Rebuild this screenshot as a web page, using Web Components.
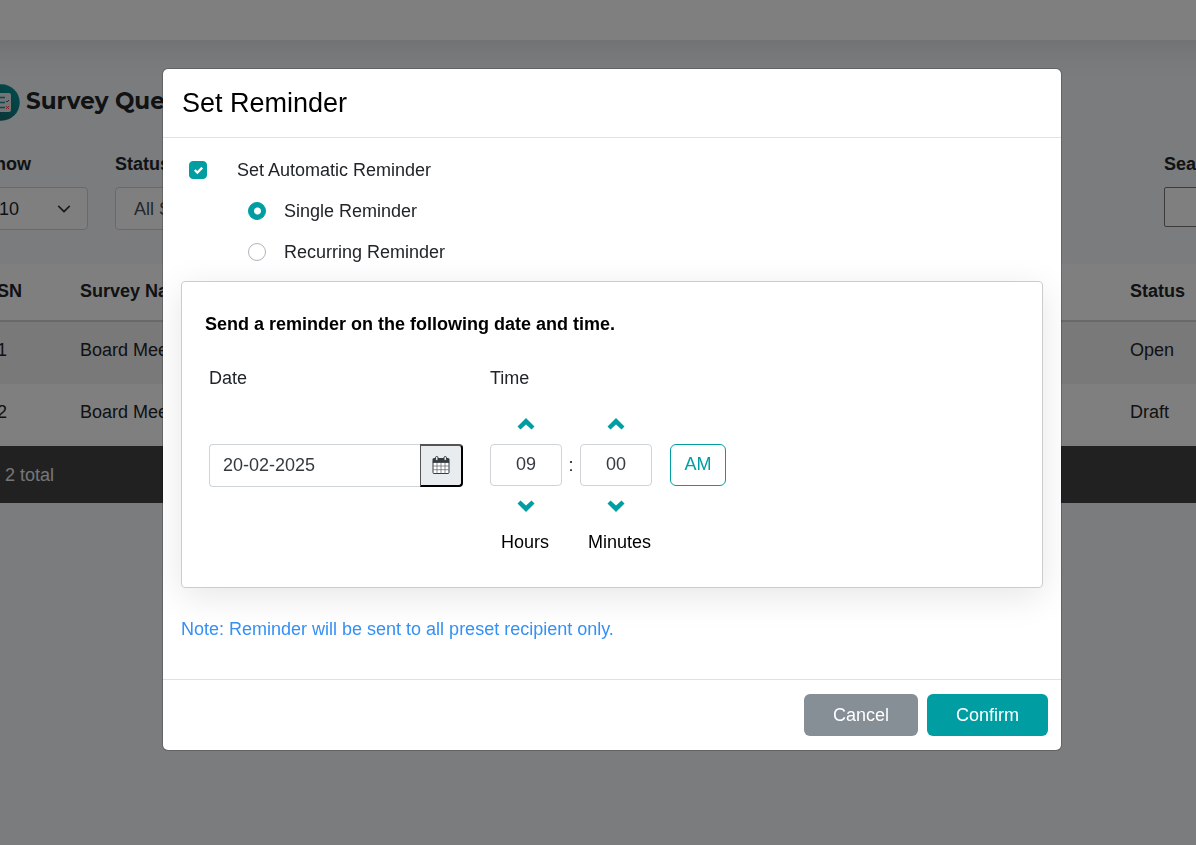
<!DOCTYPE html>
<html lang="en">
<head>
<meta charset="utf-8">
<title>Set Reminder</title>
<style>
    :root {
        --color-teal: #009ea2;
        --color-text: #212529;
        --color-border: #ced4da;
        --color-line: #dee2e6;
    }

    body {
        margin: 0;
        min-height: 100vh;
        background: #f5f8fb;
        color: var(--color-text);
        font-family: "Liberation Sans", Arial, sans-serif;
        font-size: 18px;
        line-height: 24px;
        overflow: hidden;
    }
</style>
</head>
<body>
<survey-page></survey-page>
<reminder-modal heading="Set Reminder">
    <reminder-option type="checkbox" name="automatic" checked>Set Automatic Reminder</reminder-option>
    <reminder-option type="radio" name="kind" checked>Single Reminder</reminder-option>
    <reminder-option type="radio" name="kind">Recurring Reminder</reminder-option>
    <schedule-card heading="Send a reminder on the following date and time.">
        <date-field slot="date" value="20-02-2025">Date</date-field>
        <time-field slot="time" hours="09" minutes="00" period="AM">Time</time-field>
    </schedule-card>
    <span slot="note">Note: Reminder will be sent to all preset recipient only.</span>
    <action-button slot="actions" color="#868e96">Cancel</action-button>
    <action-button slot="actions" color="#009ea2">Confirm</action-button>
</reminder-modal>

<script>
class SurveyPage extends HTMLElement {
    constructor() {
        super();
        this.attachShadow({ mode: 'open' });
    }

    connectedCallback() {
        this.shadowRoot.innerHTML = `
            <style>
                :host {
                    display: block;
                    overflow: hidden;
                }

                header {
                    height: 40px;
                    margin: 0 -60px;
                    background: #fff;
                    box-shadow: 0 8px 32px rgba(0, 0, 0, 0.1);
                }

                /* the content is wider than the window on both sides */
                main {
                    margin: 44px -180px 0 -17px;
                }

                h1 {
                    display: flex;
                    align-items: center;
                    gap: 6px;
                    margin: 0 0 34px;
                    font: 700 23px/34px Montserrat, "Open Sans", sans-serif;
                    white-space: nowrap;
                }

                h1 svg {
                    width: 37px;
                    height: 37px;
                    margin-bottom: -3px;
                }

                .filters {
                    display: flex;
                    gap: 27px;
                    margin-bottom: 34px;
                }

                .filters div {
                    display: flex;
                    flex-direction: column;
                    gap: 11px;
                }

                .filters .search {
                    margin-left: auto;
                }

                label {
                    font-weight: 700;
                }

                select, input {
                    box-sizing: border-box;
                    font: inherit;
                    color: #495057;
                    background: #fff;
                }

                select {
                    appearance: none;
                    width: 180px;
                    height: 43px;
                    padding: 0 18px;
                    border: 1px solid var(--color-border);
                    border-radius: 4px;
                }

                #show {
                    width: 105px;
                    padding: 0 15px;
                    color: var(--color-text);
                    background: #fff url("data:image/svg+xml,%3Csvg xmlns='http://www.w3.org/2000/svg' viewBox='0 0 16 16'%3E%3Cpath fill='none' stroke='%23343a40' stroke-width='2' stroke-linecap='round' stroke-linejoin='round' d='m2 5 6 6 6-6'/%3E%3C/svg%3E") no-repeat right 16px center / 14px;
                }

                input {
                    width: 212px;
                    height: 40px;
                    border: 1px solid #767676;
                    border-radius: 2px;
                }

                table {
                    width: 100%;
                    border-collapse: collapse;
                    table-layout: fixed;
                    background: #fff;
                }

                th, td {
                    padding: 0 14px;
                    text-align: left;
                    font-weight: 400;
                }

                thead th {
                    height: 53px;
                    padding-bottom: 3px;
                    font-weight: 700;
                    border-bottom: 2px solid #cfd2d5;
                }

                tbody tr:first-child {
                    background: #f2f2f2;
                }

                tbody td {
                    height: 56px;
                    padding-bottom: 6px;
                }

                tfoot td {
                    height: 57px;
                    padding-left: 22px;
                    background: #434343;
                    color: #e9ecef;
                }

                .number { width: 55px; }
                .status { width: 232px; }
            </style>
            <header></header>
            <main>
                <h1>
                    <svg viewBox="0 0 37 37" aria-hidden="true">
                        <defs>
                            <linearGradient id="disc" x1="0" y1="1" x2="1" y2="0">
                                <stop offset="0" stop-color="#1d5b65"/>
                                <stop offset="1" stop-color="#009c9c"/>
                            </linearGradient>
                        </defs>
                        <circle cx="18.500" cy="18.500" r="18.200" fill="url(#disc)"/>
                        <rect x="9" y="9" width="19" height="19" rx="2" fill="#e4e8ee"/>
                        <path d="M12 13.500h10M12 18.500h10M12 23.500h10" stroke="#1b8c93" stroke-width="1.500"/>
                        <path d="m23 17 1 1 2-2" fill="none" stroke="#555"/>
                        <path d="m23 22 3 3m0-3-3 3" stroke="#e05545"/>
                    </svg>
                    Survey Questionnaire
                </h1>
                <div class="filters">
                    <div>
                        <label for="show">Show</label>
                        <select id="show"><option>10</option></select>
                    </div>
                    <div>
                        <label for="status">Status</label>
                        <select id="status"><option>All Status</option></select>
                    </div>
                    <div class="search">
                        <label for="search">Search</label>
                        <input id="search" type="search">
                    </div>
                </div>
                <table>
                    <thead>
                        <tr><th class="number">SN</th><th>Survey Name</th><th class="status">Status</th></tr>
                    </thead>
                    <tbody>
                        <tr><td>1</td><td>Board Meeting</td><td>Open</td></tr>
                        <tr><td>2</td><td>Board Meeting</td><td>Draft</td></tr>
                    </tbody>
                    <tfoot>
                        <tr><td colspan="3">2 total</td></tr>
                    </tfoot>
                </table>
            </main>
        `;
    }
}

class ReminderModal extends HTMLElement {
    constructor() {
        super();
        this.attachShadow({ mode: 'open' });
    }

    connectedCallback() {
        this.shadowRoot.innerHTML = `
            <style>
                :host {
                    position: fixed;
                    inset: 0;
                    display: flex;
                    justify-content: center;
                    align-items: flex-start;
                    padding: 68px 0 0 28px;
                    background: rgba(0, 0, 0, 0.5);
                    overflow: auto;
                }

                section {
                    box-sizing: border-box;
                    width: 100%;
                    max-width: 900px;
                    background: #fff;
                    background-clip: padding-box;
                    border: 1px solid rgba(0, 0, 0, 0.2);
                    border-radius: 6px;
                    overflow: hidden;
                }

                header {
                    padding: 17px 19px;
                    border-bottom: 1px solid var(--color-line);
                }

                h2 {
                    margin: 0;
                    font-size: 27px;
                    font-weight: 400;
                    line-height: 34px;
                    color: #000;
                }

                .body {
                    padding: 20px 18px 38px;
                }

                .note {
                    margin: 29px 0 0;
                    color: #3490f5;
                }

                footer {
                    display: flex;
                    justify-content: flex-end;
                    gap: 9px;
                    padding: 14px 13px;
                    border-top: 1px solid var(--color-line);
                }
            </style>
            <section role="dialog" aria-modal="true" aria-labelledby="title">
                <header><h2 id="title">${this.getAttribute('heading')}</h2></header>
                <div class="body">
                    <slot></slot>
                    <p class="note"><slot name="note"></slot></p>
                </div>
                <footer><slot name="actions"></slot></footer>
            </section>
        `;
    }
}

class ReminderOption extends HTMLElement {
    constructor() {
        super();
        this.attachShadow({ mode: 'open' });
    }

    connectedCallback() {
        const type = this.getAttribute('type');
        const checked = this.hasAttribute('checked') ? 'checked' : '';

        this.shadowRoot.innerHTML = `
            <style>
                :host {
                    display: block;
                    margin-bottom: 17px;
                }

                label {
                    display: flex;
                    align-items: center;
                    gap: 30px;
                    padding-left: 8px;
                }

                :host([type="radio"]) label {
                    gap: 18px;
                    padding-left: 67px;
                }

                input {
                    appearance: none;
                    box-sizing: border-box;
                    width: 18px;
                    height: 18px;
                    margin: 0;
                    border: 1px solid #adb5bd;
                    border-radius: 4px;
                }

                input[type="radio"] {
                    border-radius: 50%;
                }

                input:checked {
                    border-color: var(--color-teal);
                    background: var(--color-teal) center / 9px no-repeat;
                }

                input[type="checkbox"]:checked {
                    background-image: url("data:image/svg+xml,%3Csvg xmlns='http://www.w3.org/2000/svg' viewBox='0 0 8 8'%3E%3Cpath fill='%23fff' d='M6.564.75l-3.590 3.612-1.538-1.550L0 4.260l2.974 2.990L8 2.193z'/%3E%3C/svg%3E");
                }

                input[type="radio"]:checked {
                    background-image: radial-gradient(circle, #fff 3px, transparent 4px);
                }
            </style>
            <label>
                <input type="${type}" name="${this.getAttribute('name')}" ${checked}>
                <slot></slot>
            </label>
        `;
    }
}

class ScheduleCard extends HTMLElement {
    constructor() {
        super();
        this.attachShadow({ mode: 'open' });
    }

    connectedCallback() {
        this.shadowRoot.innerHTML = `
            <style>
                :host {
                    display: block;
                    padding: 30px 23px 33px;
                    border: 1px solid #ccc;
                    border-radius: 4px;
                    box-shadow: 0 8px 36px rgba(0, 0, 0, 0.1);
                }

                h3 {
                    margin: 0 0 30px;
                    font-size: 18px;
                    line-height: 24px;
                    color: #000;
                }

                .fields {
                    display: flex;
                    flex-wrap: wrap;
                    gap: 27px;
                    padding-left: 4px;
                }
            </style>
            <h3>${this.getAttribute('heading')}</h3>
            <div class="fields">
                <slot name="date"></slot>
                <slot name="time"></slot>
            </div>
        `;
    }
}

class DateField extends HTMLElement {
    constructor() {
        super();
        this.attachShadow({ mode: 'open' });
    }

    connectedCallback() {
        this.shadowRoot.innerHTML = `
            <style>
                :host {
                    display: block;
                }

                .group {
                    display: flex;
                    margin-top: 54px;
                }

                input {
                    box-sizing: border-box;
                    width: 211px;
                    height: 43px;
                    padding: 0 13px;
                    border: 1px solid var(--color-border);
                    border-right: 0;
                    border-radius: 4px 0 0 4px;
                    font: inherit;
                    color: #343a40;
                }

                button {
                    display: flex;
                    align-items: center;
                    justify-content: center;
                    box-sizing: border-box;
                    width: 43px;
                    height: 43px;
                    padding: 0;
                    background: #e9ecef;
                    border: 2px outset #000;
                    border-left-width: 1px;
                    border-radius: 0 4px 4px 0;
                }

                svg {
                    width: 18px;
                    height: 18px;
                    margin-bottom: 2px;
                }
            </style>
            <label for="date"><slot></slot></label>
            <div class="group">
                <input id="date" type="text" value="${this.getAttribute('value')}">
                <button type="button" aria-label="Open calendar">
                    <svg viewBox="0 0 18 18">
                        <path d="M0.500 3.500q0-1.500 1.500-1.500h14q1.500 0 1.500 1.500V7h-17z" fill="#343a40"/>
                        <rect x="1" y="6" width="16" height="11.500" rx="1" fill="#fff" stroke="#343a40"/>
                        <path d="M5 6.500v11M9 6.500v11M13 6.500v11M1 10h16M1 13.700h16" stroke="#6b7075" stroke-width=".8"/>
                        <path d="M1 6h16" stroke="#343a40" stroke-width="1.500"/>
                        <rect x="3.500" y=".5" width="2.500" height="4" rx="1.200" fill="#e9ecef" stroke="#343a40"/>
                        <rect x="12" y=".5" width="2.500" height="4" rx="1.200" fill="#e9ecef" stroke="#343a40"/>
                    </svg>
                </button>
            </div>
        `;
    }
}

class TimeField extends HTMLElement {
    constructor() {
        super();
        this.attachShadow({ mode: 'open' });
    }

    spinner(id, value) {
        return `
            <div class="spinner">
                <button class="step" type="button" aria-label="Increase ${id}">
                    <svg viewBox="0 0 18 12"><path d="M9 0l8.500 8.500-3 3L9 6.500l-5.500 5-3-3z"/></svg>
                </button>
                <input id="${id}" type="text" inputmode="numeric" value="${value}">
                <button class="step" type="button" aria-label="Decrease ${id}">
                    <svg viewBox="0 0 18 12"><path d="M9 12l8.500-8.500-3-3L9 5.500l-5.500-5-3 3z"/></svg>
                </button>
            </div>
        `;
    }

    connectedCallback() {
        this.shadowRoot.innerHTML = `
            <style>
                :host {
                    display: block;
                }

                .row {
                    display: flex;
                    align-items: center;
                    margin-top: 14px;
                }

                .spinner {
                    display: flex;
                    flex-direction: column;
                    width: 72px;
                }

                .step {
                    display: flex;
                    align-items: center;
                    justify-content: center;
                    height: 40px;
                    padding: 0;
                    border: 0;
                    background: none;
                }

                svg {
                    width: 18px;
                    height: 12px;
                }

                path {
                    fill: var(--color-teal);
                }

                input, .period {
                    box-sizing: border-box;
                    height: 42px;
                    padding: 0;
                    border: 1px solid var(--color-border);
                    border-radius: 4px;
                    font: inherit;
                    text-align: center;
                    color: #343a40;
                }

                .spinner input {
                    width: 100%;
                    padding-bottom: 2px;
                }

                .colon {
                    width: 18px;
                    text-align: center;
                }

                .period {
                    width: 56px;
                    margin-left: 18px;
                    padding-bottom: 2px;
                    border-color: var(--color-teal);
                    border-radius: 6px;
                    background: #fff;
                    color: var(--color-teal);
                }

                .units {
                    display: flex;
                    gap: 39px;
                    margin-top: 4px;
                    padding-left: 11px;
                    color: #000;
                }
            </style>
            <slot></slot>
            <div class="row">
                ${this.spinner('hours', this.getAttribute('hours'))}
                <span class="colon">:</span>
                ${this.spinner('minutes', this.getAttribute('minutes'))}
                <button class="period" type="button">${this.getAttribute('period')}</button>
            </div>
            <div class="units">
                <label for="hours">Hours</label>
                <label for="minutes">Minutes</label>
            </div>
        `;
    }
}

class ActionButton extends HTMLElement {
    constructor() {
        super();
        this.attachShadow({ mode: 'open' });
    }

    connectedCallback() {
        this.style.setProperty('--fill-color', this.getAttribute('color'));

        this.shadowRoot.innerHTML = `
            <style>
                :host {
                    display: block;
                }

                button {
                    height: 42px;
                    padding: 0 29px;
                    border: 0;
                    border-radius: 6px;
                    background: var(--fill-color);
                    color: #fff;
                    font: inherit;
                }
            </style>
            <button type="button"><slot></slot></button>
        `;
    }
}

customElements.define('survey-page', SurveyPage);
customElements.define('reminder-modal', ReminderModal);
customElements.define('reminder-option', ReminderOption);
customElements.define('schedule-card', ScheduleCard);
customElements.define('date-field', DateField);
customElements.define('time-field', TimeField);
customElements.define('action-button', ActionButton);
</script>
</body>
</html>
